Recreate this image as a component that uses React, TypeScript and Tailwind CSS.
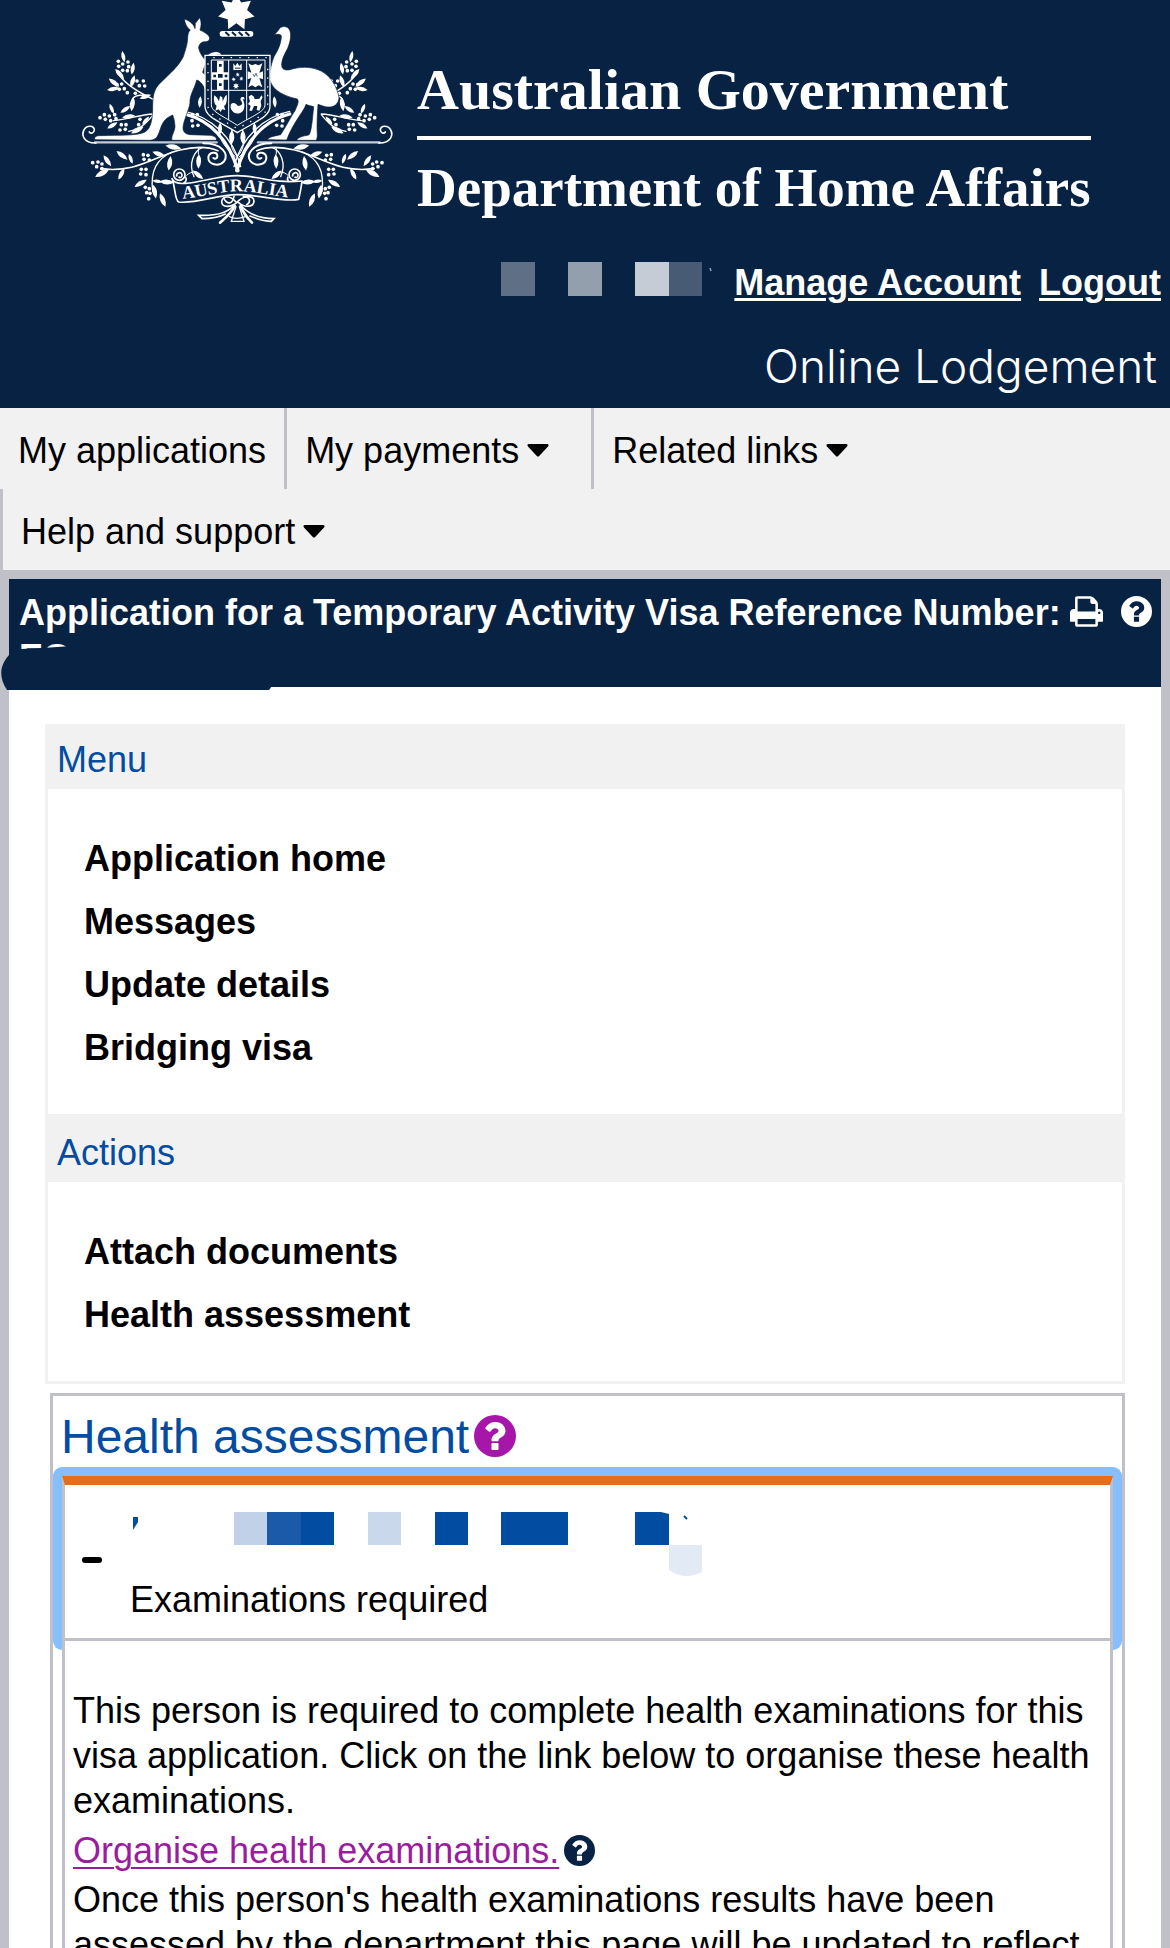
import React from "react";

type IconProps = { className?: string };

function HelpIcon({ className }: IconProps) {
  return (
    <svg viewBox="128 128 1536 1536" fill="currentColor" className={className} aria-hidden="true">
      <path
        fillRule="evenodd"
        d="M896 128A768 768 0 1 1 896 1664A768 768 0 1 1 896 128ZM1024 1376v-192q0-14-9-23t-23-9h-192q-14 0-23 9t-9 23v192q0 14 9 23t23 9h192q14 0 23-9t9-23zM1280 704q0-88-55.5-163t-138.5-116-170-41q-243 0-371 213-15 24 8 42l132 100q7 6 19 6 16 0 25-12 53-68 86-92 34-24 86-24 48 0 85.5 26t37.5 59q0 38-20 61t-68 45q-63 28-115.5 86.5t-52.5 125.5v36q0 14 9 23t23 9h192q14 0 23-9t9-23q0-19 21.5-49.5t54.5-49.5q32-18 49-28.5t46-35 44.5-48 28-60.5 12.5-81z"
      />
    </svg>
  );
}

function PrintIcon({ className }: IconProps) {
  return (
    <svg viewBox="0 128 1664 1536" fill="currentColor" className={className} aria-hidden="true">
      <path d="M384 1536h896v-256h-896v256zM384 896h896v-384h-160q-40 0-68-28t-28-68v-160h-640v640zM1536 960q0-26-19-45t-45-19-45 19-19 45 19 45 45 19 45-19 19-45zM1664 960v416q0 13-9.5 22.5t-22.5 9.5h-224v160q0 40-28 68t-68 28h-960q-40 0-68-28t-28-68v-160h-224q-13 0-22.5-9.5t-9.5-22.5v-416q0-79 56.5-135.5t135.5-56.5h64v-544q0-40 28-68t68-28h672q40 0 88 20t76 48l152 152q28 28 48 76t20 88v256h64q79 0 135.5 56.5t56.5 135.5z" />
    </svg>
  );
}

function Caret() {
  return (
    <svg viewBox="0 0 22 14" fill="currentColor" className="ml-2 h-3.5 w-[22px]" aria-hidden="true">
      <path d="M2 0H20C21.600 0 22 1.400 21 2.500L12.200 12Q11 13 9.800 12L1 2.500C0 1.400 .4 0 2 0Z" />
    </svg>
  );
}

/* Emblem foliage: [x, y, angle, length] */
const LEAVES: number[][] = [
  [160, 170, 78, 34], [188, 206, 100, 36], [149, 222, 48, 40], [132, 248, 38, 40], [130, 267, -8, 38],
  [188, 244, -72, 38], [187, 312, 98, 44], [226, 290, -18, 36], [125, 326, 68, 32], [166, 328, -35, 36],
  [176, 350, -8, 40], [127, 376, -32, 36], [227, 362, -50, 32], [202, 390, -28, 42], [390, 306, 95, 34],
  [112, 482, 55, 40], [96, 520, -28, 46], [154, 522, -62, 38], [156, 466, 38, 42], [182, 476, 70, 32],
  [266, 462, 20, 40], [299, 490, 98, 44], [212, 550, -30, 42], [262, 544, 8, 30], [290, 546, 4, 44],
  [254, 575, 80, 42], [278, 600, 68, 44], [310, 441, 10, 48], [386, 484, 92, 44], [384, 524, 40, 40],
  [450, 386, 92, 36], [485, 412, 92, 46],
];

const DOTS: number[][] = [
  [145, 184], [146, 199], [158, 192], [174, 186], [176, 200], [158, 211], [172, 212],
  [201, 243], [220, 243], [208, 257], [224, 258], [141, 254], [155, 252], [148, 268], [163, 266], [172, 278], [196, 280],
  [90, 353], [103, 344], [106, 358], [118, 348], [122, 362], [134, 344], [138, 356],
  [154, 374], [168, 374], [150, 390], [166, 388], [210, 358], [206, 374], [368, 344], [382, 344], [366, 362], [368, 378], [384, 376],
  [68, 488], [80, 500], [84, 486], [96, 492], [96, 506], [220, 464], [234, 466], [222, 478], [238, 480],
  [214, 508], [228, 508], [212, 522], [228, 524], [226, 562], [238, 566], [230, 578], [236, 596], [240, 580],
];

function starPoints(cx: number, cy: number, outer: number, inner: number, n: number) {
  return Array.from({ length: n * 2 }, (_, i) => {
    const r = i % 2 ? inner : outer;
    const a = (Math.PI * i) / n - Math.PI / 2;
    return `${(cx + r * Math.cos(a)).toFixed(1)},${(cy + r * Math.sin(a)).toFixed(1)}`;
  }).join(" ");
}

function Foliage() {
  return (
    <g>
      {LEAVES.map(([x, y, a, l], i) => (
        <path
          key={i}
          d={`M${-l / 2} 0Q0 ${-l * 0.34} ${l / 2} 0Q0 ${l * 0.34} ${-l / 2} 0Z`}
          transform={`translate(${x} ${y}) rotate(${a})`}
        />
      ))}
      {DOTS.map(([x, y], i) => (
        <circle key={i} cx={x} cy={y} r="5.5" />
      ))}
      <g fill="none" stroke="white" strokeLinecap="round">
        <path strokeWidth="4" d="M150 228C172 258 212 280 250 298M188 296C198 284 212 284 226 288" />
        <path strokeWidth="4" d="M130 362C180 358 205 344 250 342M176 394C214 388 232 366 250 344" />
        <path strokeWidth="5" d="M92 506C200 520 250 470 330 450C370 440 410 438 444 452" />
        <path strokeWidth="4" d="M248 574C240 510 262 476 306 456M372 530C354 490 372 452 398 442" />
        <path strokeWidth="3" d="M385 462V444M350 526C356 520 364 516 374 516" />
        <path strokeWidth="10" d="M345 342C420 362 476 420 504 512" />
        <path strokeWidth="4" d="M345 334C420 350 490 410 512 500" />
        <path strokeWidth="3" d="M452 366C438 420 466 440 496 470M486 390C478 430 484 450 502 470" />
        <path strokeWidth="7" stroke="#c3cbd5" d="M440 427H75" />
        <path strokeWidth="5" d="M78 429C40 430 34 404 42 390C50 374 74 376 73 390C72 400 62 402 58 396" />
        <path strokeWidth="6" d="M400 430C456 430 478 462 462 484C446 502 414 494 415 472C417 456 440 454 442 466C443 476 436 478 430 474" />
      </g>
    </g>
  );
}

function CoatOfArms({ className }: IconProps) {
  return (
    <svg viewBox="0 0 1020 720" fill="white" className={className} role="img" aria-label="Commonwealth Coat of Arms">
      <polygon points={starPoints(499, 37, 56, 33, 7)} />
      <rect x="449" y="93" width="101" height="17" rx="8" />
      <path stroke="#082243" strokeWidth="6" d="M466 96L478 107M486 96L498 107M506 96L518 107M526 96L538 107" />

      <Foliage />
      <g transform="translate(1004 0) scale(-1 1)">
        <Foliage />
      </g>

      {/* kangaroo */}
      <path stroke="#082243" strokeWidth="2" d="M343 57C360 62 372 74 375 86L376 70L389 53C396 68 393 80 390 90C402 96 417 104 419 114C418 124 412 125 398 126C390 130 386 136 386 144C388 156 396 168 404 178C410 164 424 154 440 155C450 156 456 162 452 166C438 164 424 168 414 178C404 192 402 205 398 217C412 230 421 250 418 276C410 278 404 270 402 262C396 250 388 242 380 240C376 260 362 280 360 300C362 320 345 350 340 375C336 395 345 402 360 404L420 406C436 408 442 414 438 421L306 421C302 410 314 395 315 380C314 365 312 355 308 345C296 350 284 358 278 370C266 392 268 420 240 421L75 419C72 412 76 407 90 407C150 405 200 408 225 396C245 385 248 350 248 320C248 280 255 262 275 245C300 220 325 200 340 170C350 140 353 125 353 112C354 100 356 94 361 90C352 84 345 72 343 57Z" />

      {/* emu */}
      <path stroke="#082243" strokeWidth="2" d="M612 104C620 98 624 92 628 86C636 77 652 77 659 90C665 105 661 125 653 145C642 165 632 185 636 201C640 213 655 211 670 206C700 199 730 201 755 214C785 231 801 262 807 292C806 310 796 320 780 321C765 323 752 315 744 313C742 345 740 380 742 404C742 412 740 420 738 421L680 421C684 411 700 408 716 405C724 400 727 360 731 320C725 318 715 317 708 313C704 325 697 335 690 345C674 370 660 392 650 420L592 419C596 410 615 408 632 404C645 385 663 350 676 330C682 315 688 305 682 297C650 290 608 275 600 240C598 215 604 190 612 170C624 150 634 130 634 107C630 102 622 102 612 104Z" />

      {/* shield */}
      <path fill="#082243" stroke="white" strokeWidth="4" d="M405 166H600V318C600 352 556 364 502 398C448 364 405 352 405 318Z" />
      <path fill="none" stroke="white" strokeWidth="3" d="M424 180H585V314C585 336 546 348 502 376C460 348 424 336 424 314ZM476 180V360M530 180V360M424 271H585" />
      <path fill="none" stroke="white" strokeWidth="4" strokeDasharray="4 22" d="M414 190V318C414 345 456 358 502 386C550 358 593 345 593 318V190M430 173H590" />
      <path d="M441 182H461V217H475V239H461V270H441V239H426V217H441Z" />
      <path fill="#082243" d="M447 192h8v8h-8zM447 250h8v8h-8zM430 224h8v8h-8zM464 224h8v8h-8zM444 222h14v11h-14z" />
      <path d="M490 190L496 198L502 188L508 198L515 190V210H490Z" />
      <path fill="#082243" d="M495 203h16v3h-16z" />
      <polygon points={starPoints(503, 224, 7, 3, 7)} />
      <polygon points={starPoints(491, 238, 7, 3, 7)} />
      <polygon points={starPoints(514, 236, 7, 3, 7)} />
      <polygon points={starPoints(498, 258, 10, 5, 7)} />
      <path d="M535 190L546 196L556 192L566 196L577 190L568 218L579 214V238L568 234L577 262L566 256L556 262L546 256L535 262L544 234L533 238V214L544 218Z" />
      <path fill="none" stroke="#082243" strokeWidth="2" d="M549 222L553 230L558 220L562 230" />
      <path d="M433 286C440 290 444 298 447 304L450 288L457 292L458 304C462 296 464 288 470 284C472 298 470 314 462 318L466 330L456 328L452 336L446 328L436 332L440 318C432 312 430 298 433 286Z" />
      <path d="M483 312C490 306 498 310 504 318C514 318 520 312 514 304C508 296 514 288 522 292L524 298L518 298C524 308 526 324 518 334C508 344 494 342 488 334C482 328 480 320 483 312Z" />
      <path d="M536 290L544 284L552 290L554 298L568 296L574 286L578 292L572 304L574 318L568 332L560 330L562 318L552 318L546 332L538 332L542 318L534 312L540 304Z" />

      {/* scroll */}
      <g fill="none" stroke="white" strokeWidth="5">
        <circle cx="328" cy="524" r="17" />
        <path d="M320 530C318 516 336 514 336 526C336 534 328 534 326 530M346 530C352 540 348 546 338 552" />
        <circle cx="674" cy="524" r="17" />
        <path d="M668 530C666 516 684 514 684 526C684 534 676 534 674 530M654 530C650 540 654 546 664 550" />
      </g>
      <path fill="#082243" stroke="white" strokeWidth="5" strokeLinejoin="round" d="M306 536C312 550 326 552 346 550C400 546 440 528 502 527C566 527 610 552 696 543C694 562 690 580 686 598C640 608 570 584 502 584C440 584 380 612 326 606C314 602 316 560 306 536Z" />
      <path id="scroll-line" fill="none" d="M338 596C400 592 440 575 502 574C560 574 610 590 672 594" />
      <text className="font-['Liberation_Serif',serif] text-[54px] font-bold" fill="white">
        <textPath href="#scroll-line">AUSTRALIA</textPath>
      </text>

      {/* ribbon */}
      <g fill="none" stroke="white" strokeWidth="5" strokeLinecap="round">
        <path d="M498 606C480 584 456 588 455 606C456 624 484 622 500 608C516 588 552 582 552 604C550 624 520 622 506 608" />
        <path d="M462 596C470 612 486 616 492 590M520 590C540 588 544 606 530 614" />
        <path d="M490 618C470 640 430 648 386 646L396 656C430 656 450 650 466 642" />
        <path d="M514 618C540 646 580 656 612 656L604 664C580 664 560 656 540 648" />
        <path strokeWidth="8" d="M494 618C484 640 466 654 450 668M512 618C520 640 532 654 546 668" />
        <path strokeWidth="4" d="M498 620L484 664H522L508 620M478 650C490 656 510 656 526 650" />
      </g>
    </svg>
  );
}

type NavEntry = { label: string; menu: boolean; box: string };

const NAV: NavEntry[] = [
  { label: "My applications", menu: false, box: "px-[18px]" },
  { label: "My payments", menu: true, box: "border-l-[3px] pl-[18px] pr-[42px]" },
  { label: "Related links", menu: true, box: "border-l-[3px] pl-[18px] pr-[42px]" },
  { label: "Help and support", menu: true, box: "border-l-[3px] pl-[18px] pr-[42px]" },
];

function MenuGroup({ title, items, first }: { title: string; items: string[]; first?: boolean }) {
  return (
    <section>
      <h2 className={`bg-[#f1f1f1] px-[9px] text-[#024ca1] ${first ? "pt-2.5 pb-[7px]" : "pt-4 pb-[7px]"}`}>{title}</h2>
      <ul className="px-9 pt-[38px] pb-[35px] leading-[63px] font-bold">
        {items.map((item) => (
          <li key={item}>
            <a href="#">{item}</a>
          </li>
        ))}
      </ul>
    </section>
  );
}

export default function App() {
  return (
    <div className="h-screen overflow-hidden bg-[#bfc0c8] font-['Liberation_Sans',Arial,sans-serif] text-[36px] leading-[45px] text-black">
      <header className="bg-[#082243] pb-3 text-white">
        <div className="flex items-start pl-[70px]">
          <CoatOfArms className="h-60 w-[340px] shrink-0" />
          <div className="ml-[7px] font-['Liberation_Serif',serif] font-bold whitespace-nowrap">
            <p className="pt-[57px] text-[58px] leading-[66px]">Australian Government</p>
            <div className="mt-[13px] h-1 bg-white" />
            <p className="mt-[15px] text-[55px] leading-[66px]">Department of Home Affairs</p>
          </div>
        </div>
        <div className="flex justify-end pt-5 pr-[9px]">
          <svg viewBox="0 0 212 36" className="mt-0.5 mr-[21px] h-9 w-[212px]" role="img" aria-label="Account name hidden">
            <path fill="#5f6f86" d="M0 0h34v34H0z" />
            <path fill="#949fae" d="M67 0h34v34H67z" />
            <path fill="#c5ccd5" d="M134 0h34v34h-34z" />
            <path fill="#485b75" d="M168 0h33v34h-33z" />
            <path stroke="#949fae" strokeWidth="1.5" d="M209 6l1 3" />
          </svg>
          <nav aria-label="Account" className="flex gap-[18px] font-bold">
            <a href="#" className="underline decoration-[3px] underline-offset-[3px]">Manage Account</a>
            <a href="#" className="underline decoration-[3px] underline-offset-[3px]">Logout</a>
          </nav>
        </div>
        <p className="mt-[31px] pr-[13px] text-right font-['Inter',sans-serif] text-[46px] leading-[60px] font-light">
          Online Lodgement
        </p>
      </header>

      <nav aria-label="Main" className="bg-[#f1f1f1]">
        <ul className="flex flex-wrap">
          {NAV.map((n) => (
            <li key={n.label} className={`border-[#bfc0c8] ${n.box}`}>
              {n.menu ? (
                <button type="button" className="flex items-center pt-5 pb-4">
                  {n.label}
                  <Caret />
                </button>
              ) : (
                <a href="#" className="block pt-5 pb-4">{n.label}</a>
              )}
            </li>
          ))}
        </ul>
      </nav>

      <div className="mx-[9px] mt-[9px] bg-white">
        <div className="relative flex items-start justify-between bg-[#082243] pt-[11px] pr-[9px] pb-[7px] pl-2.5 text-white">
          <h1 className="font-bold whitespace-nowrap">
            Application for a Temporary Activity Visa Reference Number:
            <br />
            EGO
          </h1>
          <svg viewBox="0 0 272 48" className="absolute -bottom-[3px] -left-2 h-12 w-[272px]" aria-hidden="true">
            <path fill="#082243" d="M8 13Q9 8 20 7L42 6L70 4L73 2L271 2V44L268 48H6C-2 36 -2 24 8 13Z" />
          </svg>
          <div className="flex gap-[18px] pt-1.5">
            <button type="button" aria-label="Print">
              <PrintIcon className="h-[31px] w-[33px]" />
            </button>
            <button type="button" aria-label="Help">
              <HelpIcon className="size-[31px]" />
            </button>
          </div>
        </div>

        <div className="px-9 pt-[37px]">
          <div className="border-[3px] border-[#f1f1f1]">
            <MenuGroup first title="Menu" items={["Application home", "Messages", "Update details", "Bridging visa"]} />
            <MenuGroup title="Actions" items={["Attach documents", "Health assessment"]} />
          </div>

          <section className="mt-[9px] ml-[5px] border-[3px] border-[#bfc0c8]">
            <div className="flex items-start pt-[11px] pl-2">
              <h2 className="text-[48px] leading-[60px] text-[#024ca1]">Health assessment</h2>
              <button type="button" aria-label="Help with health assessment" className="mt-2 ml-[5px] text-[#a516a9]">
                <HelpIcon className="size-[42px]" />
              </button>
            </div>
            <div className="rounded-[9px] bg-[#86bfff] p-[9px]">
              <button
                type="button"
                aria-expanded="true"
                className="flex w-full items-start border-x-[3px] border-t-[9px] border-b-[3px] border-x-[#bfc0c8] border-t-[#e56e1e] border-b-[#bfc0c8] bg-white pt-[27px] pb-4 pl-[17px] text-left"
              >
                <span className="mt-[45px] mr-7 h-1.5 w-5 rounded-sm bg-black" />
                <span className="block">
                  <svg viewBox="0 0 580 65" className="h-[65px] w-[580px]" role="img" aria-label="Applicant name hidden">
                    <path fill="#024ca1" d="M3 5h5v5L3 18z" />
                    <path fill="#c1d1e8" d="M104 0h33v33h-33z" />
                    <path fill="#1a5aa8" d="M137 0h34v33h-34z" />
                    <path fill="#024ca1" d="M171 0h33v33h-33z" />
                    <path fill="#cad8eb" d="M238 0h33v33h-33z" />
                    <path fill="#024ca1" d="M305 0h33v33h-33zM371 0h67v33h-67zM505 0h26l8 2v31h-34z" />
                    <path fill="#e2eaf5" d="M539 33h33v27Q555 69 539 58z" />
                    <path stroke="#024ca1" strokeWidth="2" d="M554 4l3 3" />
                  </svg>
                  <span className="block">Examinations required</span>
                </span>
              </button>
            </div>
            <div className="relative mx-[9px] -mt-[9px] border-x-[3px] border-[#bfc0c8] bg-white px-2 pt-[47px]">
              <p>
                This person is required to complete health examinations for this visa application. Click on the link
                below to organise these health examinations.
              </p>
              <p className="flex items-center pt-[5px] pb-1">
                <a href="#" className="text-[#9a1d9e] underline decoration-2 underline-offset-4">
                  Organise health examinations.
                </a>
                <button type="button" aria-label="Help with health examinations" className="ml-[5px] text-[#082243]">
                  <HelpIcon className="size-[31px]" />
                </button>
              </p>
              <p>
                Once this person's health examinations results have been assessed by the department this page will be
                updated to reflect
              </p>
            </div>
          </section>
        </div>
      </div>
    </div>
  );
}
